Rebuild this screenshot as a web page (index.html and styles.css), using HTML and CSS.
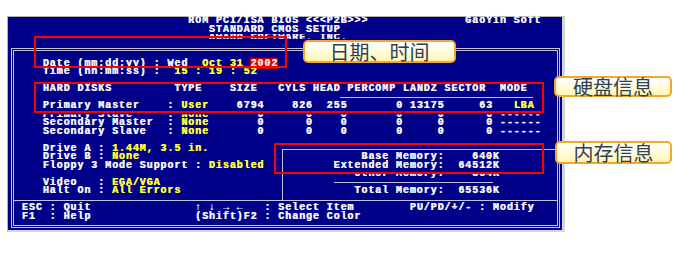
FILE: index.html
```html
<!DOCTYPE html>
<html lang="zh-CN">

<head>
  <meta charset="UTF-8" />
  <title>BIOS - Standard CMOS Setup</title>
  <link rel="stylesheet" href="styles.css">
</head>

<body>

  <div class="shot">
    <div class="screen">
      <div class="head">
        <div class="row">                          ROM PCI/ISA BIOS &lt;&lt;&lt;P2B&gt;&gt;&gt;              GaoYin Soft</div>
        <div class="row">                             STANDARD CMOS SETUP</div>
        <div class="row cut-low">                             AWARD SOFTWARE, INC.</div>
      </div>

      <div class="frame">
        <div class="main">
          <div class="row"></div>
          <div class="row">    Date (mm:dd:yy) : Wed  <span class="y">Oct 31 </span><span class="sel">2002</span></div>
          <div class="row">    Time (hh:mm:ss) :  <span class="y">15 : 19 : 52</span></div>
          <div class="row"></div>
          <div class="row">    HARD DISKS         TYPE    SIZE   CYLS HEAD PERCOMP LANDZ SECTOR  MODE</div>
          <div class="rule disk-rule"></div>
          <div class="row">    Primary Master    : <span class="y">User</span>    6794    826  255       0 13175     63   <span class="y">LBA</span></div>
          <div class="row cut-top">    Primary Slave     : <span class="y">None</span>       0      0    0       0     0      0 ------</div>
          <div class="row">    Secondary Master  : <span class="y">None</span>       0      0    0       0     0      0 ------</div>
          <div class="row">    Secondary Slave   : <span class="y">None</span>       0      0    0       0     0      0 ------</div>
          <div class="row"></div>

          <div class="lower">
            <div class="drives">
              <div class="row">    Drive A : <span class="y">1.44M, 3.5 in.</span></div>
              <div class="row">    Drive B : <span class="y">None</span></div>
              <div class="row">    Floppy 3 Mode Support : <span class="y">Disabled</span></div>
              <div class="row"></div>
              <div class="row">    Video   : <span class="y">EGA/VGA</span></div>
              <div class="row">    Halt On : <span class="y">All Errors</span></div>
            </div>
            <div class="mem">
              <div class="row">           Base Memory:    640K</div>
              <div class="row">       Extended Memory:  64512K</div>
              <div class="row cut-top">          Other Memory:    384K</div>
              <div class="rule mem-rule"></div>
              <div class="row">          Total Memory:  65536K</div>
            </div>
          </div>
        </div>

        <div class="footer">
          <div class="row"> ESC : Quit               ↑ ↓ → ←   : Select Item        PU/PD/+/- : Modify</div>
          <div class="row"> F1  : Help               (Shift)F2 : Change Color</div>
        </div>
      </div>
    </div>
  </div>

  <!-- anotasi di atas gambar -->
  <div class="box box-date"></div>
  <div class="box box-disk"></div>
  <div class="box box-mem"></div>

  <div class="tag tag-date">日期、时间</div>
  <div class="tag tag-disk">硬盘信息</div>
  <div class="tag tag-mem">内存信息</div>

</body>

</html>
```

FILE: styles.css
```css
/* Reset dan dasar */
* {
  margin: 0;
  padding: 0;
  box-sizing: border-box;
}

body {
  background: #fff;
  width: 692px;
  height: 257px;
  position: relative;
  overflow: hidden;
}

/* Bingkai tangkapan layar */
.shot {
  margin: 16px 0 0 7px;
  width: 558px;
  border: 1px solid #b4b4b4;
  border-right: 3px solid #d6d6d6;
  border-bottom: 2px solid #d6d6d6;
}

/* Layar teks 80x25 */
.screen {
  width: 554px;
  height: 213px;
  background: #000088;
  color: #f2f2f2;
  font: bold 10px/8.52px "Liberation Mono", monospace;
  letter-spacing: 0.925px;
  display: flex;
  flex-direction: column;
}

.row {
  height: 8.52px;
  white-space: pre;
  text-shadow: 0.5px 0 0 currentColor;
}

.y {
  color: #ffff30;
}

.sel {
  background: #c80000;
  color: #ffd8d8;
}

.cut-low {
  clip-path: inset(0 0 45% 0);
}

.cut-top {
  clip-path: inset(45% 0 0 0);
}

.frame {
  flex: 1;
  margin: 5.44px 2px 2px 3px;
  border: 3px double #c4c4dc;
  display: flex;
  flex-direction: column;
}

.main {
  flex: 1;
  padding-left: 0.925px;
  display: flex;
  flex-direction: column;
}

.rule {
  height: 1px;
  background: #c4c4dc;
  margin-top: 3.76px;
  margin-bottom: 3.76px;
}

.disk-rule {
  margin-left: 325px;
  width: 193px;
}

.lower {
  flex: 1;
  display: flex;
}

.drives {
  width: 267.1px;
  padding-bottom: 4.3px;
}

.mem {
  flex: 1;
  margin-top: 4.26px;
  border-top: 1px solid #c4c4dc;
  border-left: 1px solid #c4c4dc;
  padding: 3.3px 0 0 2px;
}

.mem-rule {
  margin-left: 48.5px;
  width: 159px;
}

.footer {
  border-top: 1px solid #c4c4dc;
  padding: 3.3px 0 3.5px 0.925px;
}

/* Kotak merah penanda */
.box {
  position: absolute;
  border: 2px solid #ff0000;
}

.box-date {
  left: 34px;
  top: 36px;
  width: 253px;
  height: 32px;
}

.box-disk {
  left: 34px;
  top: 82px;
  width: 510px;
  height: 31px;
}

.box-mem {
  left: 274px;
  top: 143px;
  width: 270px;
  height: 31px;
}

/* Label keterangan */
.tag {
  position: absolute;
  border: 2px solid #f4a52c;
  border-radius: 5px;
  background: linear-gradient(to bottom, #ffffff, #fffbd8 55%, #fff6b0);
  color: #2f3f54;
  font: 20px/18px "Noto Sans CJK SC", sans-serif;
  display: flex;
  align-items: center;
  justify-content: center;
}

.tag-date {
  left: 303px;
  top: 40px;
  width: 153px;
  height: 23px;
}

.tag-disk {
  left: 554px;
  top: 76px;
  width: 118px;
  height: 21px;
}

.tag-mem {
  left: 555px;
  top: 141px;
  width: 117px;
  height: 23px;
}
```
